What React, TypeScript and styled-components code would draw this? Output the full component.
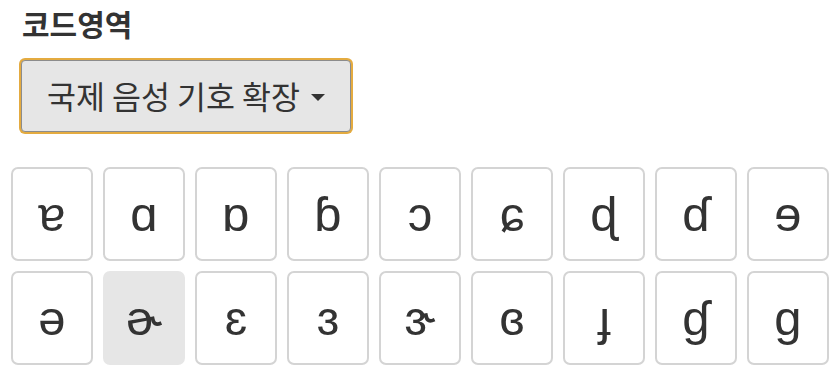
import React from "react";
import styled, { createGlobalStyle } from "styled-components";

const Global = createGlobalStyle`
  html, body { margin: 0; padding: 0; background: #ffffff; }
  body { font-family: "Noto Sans CJK KR", "Noto Sans", sans-serif; color: #333; }
`;

const Page = styled.div`
  padding: 0 2px 0 11px;
  display: flex;
  flex-direction: column;
`;

const Title = styled.h2`
  margin: 0;
  padding: 3px 0 0 11px;
  height: 41px;
  font-family: "Noto Sans CJK KR", sans-serif;
  font-weight: 700;
  font-size: 30px;
  line-height: 40px;
  color: #333;
`;

const SelectButton = styled.button`
  margin: 16px 0 0 10px;
  align-self: flex-start;
  width: 330px;
  height: 72px;
  display: flex;
  align-items: center;
  justify-content: center;
  gap: 11px;
  background: #e6e6e6;
  border: 1px solid #8c8c8c;
  border-radius: 4px;
  box-shadow: 0 0 0 2px #e4ab40;
  font-family: "Noto Sans CJK KR", sans-serif;
  font-size: 31.5px;
  color: #333;
  padding: 0 0 2px 0;
`;

const Caret = styled.span`
  width: 0;
  height: 0;
  border-left: 7px solid transparent;
  border-right: 7px solid transparent;
  border-top: 7px solid #333;
  margin-top: 4px;
`;

const Grid = styled.div`
  margin-top: 35px;
  width: 818px;
  display: grid;
  grid-template-columns: repeat(9, 1fr);
  column-gap: 10px;
  row-gap: 10px;
`;

const Key = styled.button<{ $active?: boolean }>`
  height: 94px;
  display: flex;
  align-items: center;
  justify-content: center;
  padding: 0;
  background: ${(p) => (p.$active ? "#e6e6e6" : "#ffffff")};
  border: 2px solid ${(p) => (p.$active ? "#e6e6e6" : "#d4d4d4")};
  border-radius: 7px;
  font-family: "Liberation Sans", Arial, sans-serif;
  font-size: 49px;
  line-height: 1;
  color: #333;
`;

const chars = Array.from({ length: 18 }, (_, i) => String.fromCharCode(0x250 + i));

export default function App() {
  return (
    <>
      <Global />
      <Page>
        <Title>코드영역</Title>
        <SelectButton>
          <span>국제 음성 기호 확장</span>
          <Caret />
        </SelectButton>
        <Grid>
          {chars.map((c, i) => (
            <Key key={c} $active={i === 10}>
              {c}
            </Key>
          ))}
        </Grid>
      </Page>
    </>
  );
}
